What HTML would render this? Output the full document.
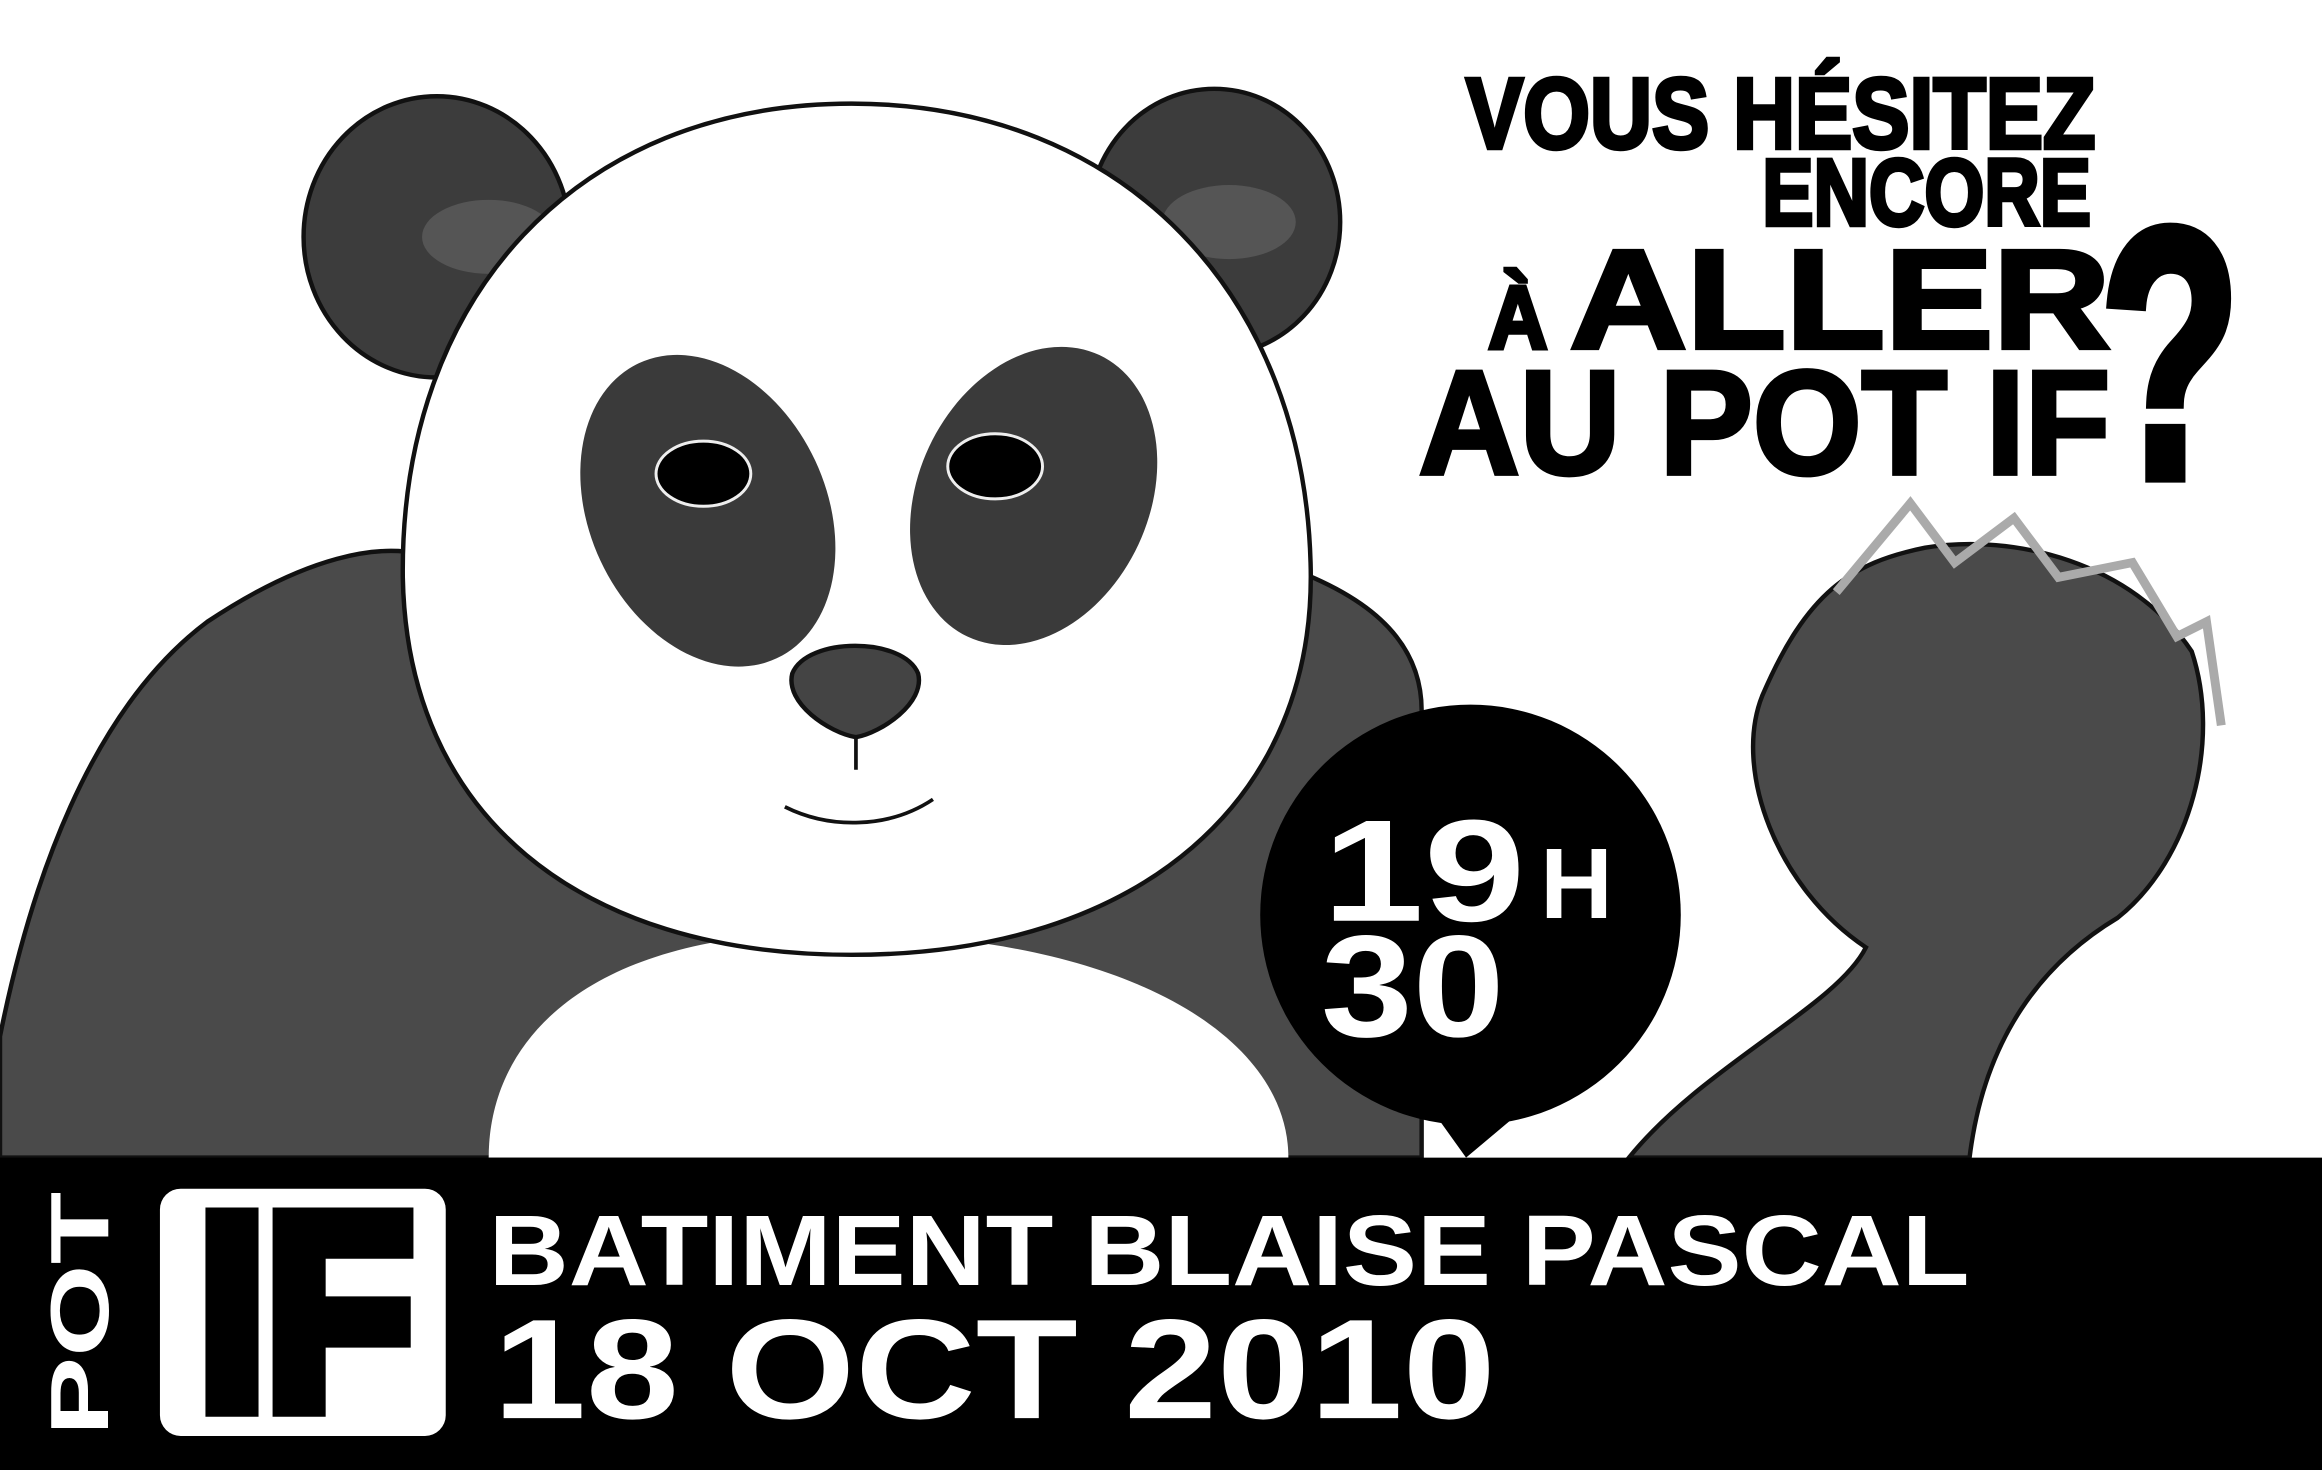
<!DOCTYPE html>
<html><head><meta charset="utf-8"><style>html,body{margin:0;padding:0;background:#fff;overflow:hidden}svg{display:block}</style></head>
<body>
<svg width="2322" height="1470" viewBox="0 0 1568 993" preserveAspectRatio="none" xmlns="http://www.w3.org/2000/svg">
<rect width="1568" height="993" fill="#fff"/>
<path d="M0,782 L0,700 C20,600 60,480 140,420 C200,380 260,360 300,380 L860,380 C920,400 960,430 960,480 L960,782 Z" fill="#4a4a4a" stroke="#111" stroke-width="3"/>
<path d="M330,782 C330,700 400,630 560,630 C760,630 870,700 870,782 Z" fill="#fff"/>
<ellipse cx="295" cy="160" rx="90" ry="95" fill="#3c3c3c" stroke="#111" stroke-width="3"/>
<ellipse cx="820" cy="150" rx="85" ry="90" fill="#3c3c3c" stroke="#111" stroke-width="3"/>
<ellipse cx="330" cy="160" rx="45" ry="25" fill="#555"/>
<ellipse cx="830" cy="150" rx="45" ry="25" fill="#555"/>
<path d="M575,70 C760,70 880,200 885,380 C890,540 770,645 575,645 C390,645 275,550 272,390 C270,200 390,70 575,70 Z" fill="#fff" stroke="#111" stroke-width="3"/>
<ellipse cx="478" cy="345" rx="80" ry="110" transform="rotate(-25 478 345)" fill="#3a3a3a"/>
<ellipse cx="698" cy="335" rx="78" ry="105" transform="rotate(25 698 335)" fill="#3a3a3a"/>
<ellipse cx="475" cy="320" rx="32" ry="22" fill="#000" stroke="#eee" stroke-width="2"/>
<ellipse cx="672" cy="315" rx="32" ry="22" fill="#000" stroke="#eee" stroke-width="2"/>
<path d="M535,455 C545,430 610,430 620,455 C625,475 595,495 578,498 C560,495 530,475 535,455 Z" fill="#444" stroke="#111" stroke-width="3"/>
<path d="M578,498 L578,520 M530,545 C560,560 600,560 630,540" stroke="#111" stroke-width="2.5" fill="none"/>
<path d="M1100,782 C1150,720 1240,680 1260,640 C1200,600 1170,520 1190,470 C1220,400 1250,380 1300,370 C1360,360 1440,380 1480,440 C1500,500 1480,580 1430,620 C1380,650 1340,700 1330,782 Z" fill="#4a4a4a" stroke="#111" stroke-width="3"/>
<path d="M1240,400 L1290,340 L1320,380 L1360,350 L1390,390 L1440,380 L1470,430 L1490,420 L1500,490" stroke="#aaa" stroke-width="6" fill="none"/>
<circle cx="993" cy="618" r="142" fill="#000"/>
<path d="M960,740 L990,782 L1040,740 Z" fill="#000"/>
<g font-family="Liberation Sans, sans-serif" font-weight="bold" fill="#fff">
<text x="893" y="622" font-size="98" textLength="137" lengthAdjust="spacingAndGlyphs">19</text>
<text x="892" y="700" font-size="98" textLength="124" lengthAdjust="spacingAndGlyphs">30</text>
<text x="1040" y="620" font-size="68">H</text>
</g>
<g font-family="Liberation Sans, sans-serif" font-weight="bold" fill="#000" stroke="#000" stroke-width="3">
<text x="990" y="100" font-size="68" textLength="425" lengthAdjust="spacingAndGlyphs">VOUS HÉSITEZ</text>
<text x="1190" y="152" font-size="64" textLength="222" lengthAdjust="spacingAndGlyphs">ENCORE</text>
<text x="1005" y="235" font-size="60" textLength="40" lengthAdjust="spacingAndGlyphs">À</text>
<text x="1060" y="235" font-size="95" textLength="365" lengthAdjust="spacingAndGlyphs">ALLER</text>
<text x="958" y="320" font-size="100" textLength="467" lengthAdjust="spacingAndGlyphs">AU POT IF</text>
<text x="1418" y="322" font-size="240" textLength="95" lengthAdjust="spacingAndGlyphs" stroke-width="8">?</text>
</g>
<rect x="0" y="782" width="1568" height="211" fill="#000"/>
<text transform="translate(73,970) rotate(-90)" font-family="Liberation Sans, sans-serif" font-weight="bold" font-size="56" fill="#fff" textLength="165" lengthAdjust="spacingAndGlyphs">POT</text>
<rect x="108" y="803" width="193" height="167" rx="14" fill="#fff"/>
<text x="134" y="950" font-family="Liberation Sans, sans-serif" font-weight="bold" font-size="185" fill="#000" stroke="#000" stroke-width="14" stroke-linejoin="miter" textLength="145" lengthAdjust="spacingAndGlyphs">IF</text>
<g font-family="Liberation Sans, sans-serif" font-weight="bold" fill="#fff">
<text x="330" y="868" font-size="68" textLength="1000" lengthAdjust="spacingAndGlyphs">BATIMENT BLAISE PASCAL</text>
<text x="333" y="958" font-size="96" textLength="677" lengthAdjust="spacingAndGlyphs">18 OCT 2010</text>
</g>
</svg>
</body></html>
